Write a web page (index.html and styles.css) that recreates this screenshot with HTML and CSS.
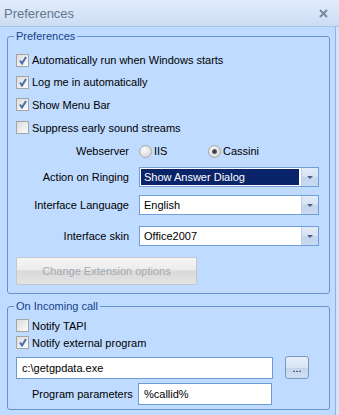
FILE: index.html
```html
<!DOCTYPE html>
<html lang="en">
<head>
    <meta charset="UTF-8">
    <title>Preferences</title>
    <link rel="stylesheet" href="styles.css">
</head>
<body>
    <div class="window">
        <div class="titlebar">
            <span class="title">Preferences</span>
            <svg class="close" width="9" height="9" viewBox="0 0 9 9">
                <path d="M1 1 L8 8 M8 1 L1 8" stroke="#7a8aa2" stroke-width="2"/>
            </svg>
        </div>

        <div class="body">
            <div class="main">
                <fieldset class="group group-prefs">
                    <legend>Preferences</legend>

                    <label class="check-row"><span class="check on"></span>Automatically run when Windows starts</label>
                    <label class="check-row"><span class="check on"></span>Log me in automatically</label>
                    <label class="check-row tall"><span class="check on"></span>Show Menu Bar</label>
                    <label class="check-row tall"><span class="check"></span>Suppress early sound streams</label>

                    <div class="form-row webserver">
                        <span class="form-label">Webserver</span>
                        <div class="radios">
                            <label class="radio-item"><span class="radio"></span>IIS</label>
                            <label class="radio-item"><span class="radio on"></span>Cassini</label>
                        </div>
                    </div>

                    <div class="form-row combo-row row-ringing">
                        <span class="form-label">Action on Ringing</span>
                        <div class="combo">
                            <span class="combo-text selected">Show Answer Dialog</span>
                            <span class="combo-btn"><span class="arrow"></span></span>
                        </div>
                    </div>

                    <div class="form-row combo-row row-lang">
                        <span class="form-label">Interface Language</span>
                        <div class="combo">
                            <span class="combo-text">English</span>
                            <span class="combo-btn"><span class="arrow"></span></span>
                        </div>
                    </div>

                    <div class="form-row combo-row row-skin">
                        <span class="form-label">Interface skin</span>
                        <div class="combo">
                            <span class="combo-text">Office2007</span>
                            <span class="combo-btn"><span class="arrow"></span></span>
                        </div>
                    </div>

                    <button class="btn-ext" disabled>Change Extension options</button>
                </fieldset>

                <fieldset class="group group-call">
                    <legend>On Incoming call</legend>

                    <label class="check-row small"><span class="check"></span>Notify TAPI</label>
                    <label class="check-row small"><span class="check on"></span>Notify external program</label>

                    <div class="path-row">
                        <div class="textbox path">c:\getgpdata.exe</div>
                        <button class="btn-browse">...</button>
                    </div>

                    <div class="param-row">
                        <span class="param-label">Program parameters</span>
                        <div class="textbox param">%callid%</div>
                    </div>
                </fieldset>
            </div>
            <div class="edge"></div>
        </div>
    </div>
</body>
</html>
```

FILE: styles.css
```css
body {
    margin: 0;
    font-family: "Liberation Sans", Arial, sans-serif;
    font-size: 11px;
    color: #000;
    background: #bfdbff;
}

.window {
    width: 339px;
    height: 415px;
    display: flex;
    flex-direction: column;
    background: #bfdbff;
    overflow: hidden;
}

/* Title bar */
.titlebar {
    height: 26px;
    flex: none;
    display: flex;
    align-items: center;
    justify-content: space-between;
    padding: 0 11px 0 4px;
    background: linear-gradient(#e3edfb, #cbdcf3);
    border-bottom: 1px solid #a5c4ec;
}

.title {
    font-size: 13px;
    color: #66768c;
}

.close {
    margin-top: 1px;
}

.body {
    flex: 1;
    display: flex;
}

.main {
    width: 336px;
    box-sizing: border-box;
    border-right: 1px solid #8fb2e0;
    padding: 3px 0 0 7px;
}

.edge {
    flex: 1;
    background: #d4e4f9;
}

/* Group boxes */
.group {
    width: 323px;
    box-sizing: border-box;
    margin: 0;
    border: 1px solid #6792cf;
    border-radius: 3px;
    padding: 0 0 8px 8px;
}

.group legend {
    color: #15428b;
    padding: 0 2px;
    margin-left: -2px;
    line-height: 13px;
}

.group-prefs {
    padding-top: 6px;
}

.group-call {
    margin-top: 6px;
    padding-top: 4px;
    padding-bottom: 4px;
}

/* Checkboxes */
.check-row {
    display: flex;
    align-items: center;
    gap: 3px;
    height: 22px;
}

.check-row.tall {
    height: 23px;
}

.check-row.small {
    height: 17px;
}

.check {
    width: 11px;
    height: 11px;
    border: 1px solid #a4a4a4;
    background: linear-gradient(135deg, #dcdcdc, #fbfbfb);
    position: relative;
}

.check.on::after {
    content: "";
    position: absolute;
    left: 2px;
    top: 1px;
    width: 8px;
    height: 9px;
    background: url("data:image/svg+xml,%3Csvg xmlns='http://www.w3.org/2000/svg' width='8' height='9'%3E%3Cpath d='M1 4.5 L3 7.5 L7 1' fill='none' stroke='%234a6ea8' stroke-width='2'/%3E%3C/svg%3E") no-repeat;
}

/* Form rows with a right aligned label */
.form-row {
    display: flex;
    align-items: center;
}

.form-label {
    width: 113px;
    text-align: right;
    margin-right: 10px;
}

.webserver {
    height: 22px;
    margin-top: 1px;
}

.radios {
    display: flex;
    gap: 2px;
}

.radio-item {
    display: flex;
    align-items: center;
    gap: 2px;
    width: 67px;
}

.radio {
    width: 11px;
    height: 11px;
    border: 1px solid #a8a8a8;
    border-radius: 50%;
    background: radial-gradient(circle at 40% 35%, #fafafa, #cfcfcf);
    position: relative;
}

.radio.on::after {
    content: "";
    position: absolute;
    left: 3px;
    top: 3px;
    width: 5px;
    height: 5px;
    border-radius: 50%;
    background: radial-gradient(circle, #3d3d3d 35%, #8c8c8c);
}

/* Combo boxes */
.combo-row {
    height: 20px;
}

.row-ringing {
    margin-top: 5px;
}

.row-lang {
    margin-top: 8px;
}

.row-skin {
    margin-top: 11px;
}

.combo {
    width: 180px;
    height: 20px;
    box-sizing: border-box;
    border: 1px solid #729fd8;
    background: #fff;
    display: flex;
}

.combo-text {
    flex: 1;
    display: flex;
    align-items: center;
    padding-left: 3px;
    margin: 1px;
}

.combo-text.selected {
    background: #0a246a;
    color: #fff;
    margin-right: 2px;
}

.combo-btn {
    width: 16px;
    background: linear-gradient(#e2ebf7 0%, #d6e3f3 50%, #c2d5ee 51%, #cadbf1 100%);
    border-left: 1px solid #bcd0ea;
    display: flex;
    align-items: center;
    justify-content: center;
}

.arrow {
    width: 0;
    height: 0;
    border-left: 3px solid transparent;
    border-right: 3px solid transparent;
    border-top: 3px solid #4c6283;
    margin-top: 1px;
}

/* Disabled button */
.btn-ext {
    display: block;
    width: 181px;
    height: 28px;
    margin-top: 11px;
    border: 1px solid #c4c8cd;
    border-radius: 2px;
    background: linear-gradient(#f6f6f6 0%, #ececec 45%, #d9d9d9 50%, #e4e4e4 100%);
    color: #a3aab0;
    font-family: inherit;
    font-size: 11px;
}

/* Incoming call section */
.path-row {
    display: flex;
    align-items: center;
    margin-top: 5px;
}

.textbox {
    height: 22px;
    box-sizing: border-box;
    border: 1px solid #6e9bd6;
    background: #fff;
    display: flex;
    align-items: center;
    padding-left: 5px;
}

.path {
    width: 257px;
}

.btn-browse {
    width: 24px;
    height: 23px;
    margin-left: 12px;
    border: 1px solid #7a98c0;
    border-radius: 3px;
    background: linear-gradient(#e6eef9 0%, #d8e4f4 50%, #c3d4ec 51%, #d3e0f2 100%);
    font-family: inherit;
    font-size: 11px;
    padding: 0;
    color: #000;
}

.param-row {
    display: flex;
    align-items: center;
    margin-top: 4px;
}

.param-label {
    width: 106px;
    padding-left: 16px;
}

.param {
    width: 134px;
}
```
